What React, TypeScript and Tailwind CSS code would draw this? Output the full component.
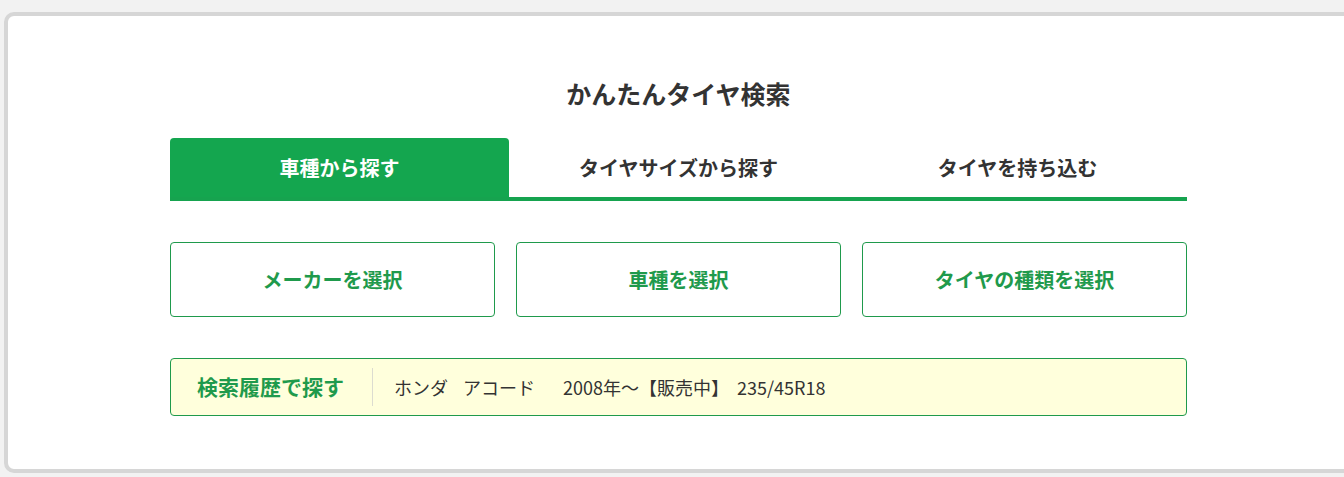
import React from 'react';

const tabs = ['車種から探す', 'タイヤサイズから探す', 'タイヤを持ち込む'];
const selects = ['メーカーを選択', '車種を選択', 'タイヤの種類を選択'];

export default function App() {
  return (
    <div
      className="h-[477px] overflow-hidden bg-[#f2f2f2] pt-[12px] pl-[4px]"
      style={{ fontFamily: '"Noto Sans CJK JP", "Noto Sans", sans-serif' }}
    >
      <div className="w-[1349px] h-[461px] border-4 border-[#d6d6d6] rounded-[10px] bg-white flex flex-col items-center pt-[59px]">
        <h2 className="text-[25px] leading-[36px] font-bold text-[#333]">かんたんタイヤ検索</h2>

        {/* Tabs */}
        <div className="w-[1017px] mt-[27px] flex border-b-4 border-[#16a34f]">
          {tabs.map((t, i) => (
            <div
              key={t}
              className={
                i === 0
                  ? 'w-[339px] h-[59px] flex items-center justify-center rounded-t-[4px] bg-[#14a64f] text-white text-[20px] font-bold'
                  : 'w-[339px] h-[59px] flex items-center justify-center text-[#333] text-[20px] font-bold'
              }
            >
              {t}
            </div>
          ))}
        </div>

        {/* Select buttons */}
        <div className="w-[1017px] mt-[41px] flex gap-[21px]">
          {selects.map((s) => (
            <button
              key={s}
              className="w-[325px] h-[75px] flex items-center justify-center border border-[#1f9a4c] rounded-[4px] bg-white text-[#1f9a4c] text-[20px] font-bold"
            >
              {s}
            </button>
          ))}
        </div>

        {/* History */}
        <div className="w-[1017px] h-[58px] mt-[41px] flex items-center border border-[#1f9a4c] rounded-[4px] bg-[#ffffdc] pl-[26px]">
          <span className="text-[21px] font-bold text-[#1f9a4c]">検索履歴で探す</span>
          <span className="ml-[28px] mr-[21px] w-px h-[38px] bg-[#dcdcd0]" />
          <span className="text-[18px] text-[#333] flex items-center">
            <span>ホンダ</span>
            <span className="ml-[15px]">アコード</span>
            <span className="ml-[28px]">2008年～【販売中】</span>
            <span className="ml-[8px]">235/45R18</span>
          </span>
        </div>
      </div>
    </div>
  );
}
